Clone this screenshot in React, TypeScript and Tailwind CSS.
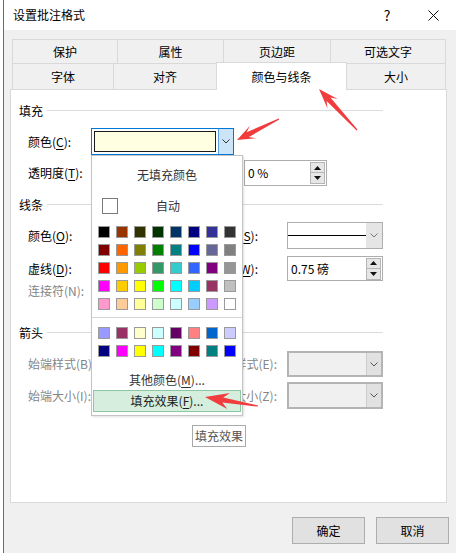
import React from 'react';

const paletteTop = [
  ['#000000', '#993300', '#333300', '#003300', '#003366', '#000080', '#333399', '#333333'],
  ['#800000', '#ff6600', '#808000', '#008000', '#008080', '#0000ff', '#666699', '#808080'],
  ['#ff0000', '#ff9900', '#99cc00', '#339966', '#33cccc', '#3366ff', '#800080', '#969696'],
  ['#ff00ff', '#ffcc00', '#ffff00', '#00ff00', '#00ffff', '#00ccff', '#993366', '#c0c0c0'],
  ['#ff99cc', '#ffcc99', '#ffff99', '#ccffcc', '#ccffff', '#99ccff', '#cc99ff', '#ffffff'],
];

const paletteBottom = [
  ['#9999ff', '#993366', '#ffffcc', '#ccffff', '#660066', '#ff8080', '#0066cc', '#ccccff'],
  ['#000080', '#ff00ff', '#ffff00', '#00ffff', '#800080', '#800000', '#008080', '#0000ff'],
];

// annotation arrow: thin tail widening toward a swept-back head
function arrow(tx: number, ty: number, px: number, py: number, head: number, barb: number) {
  const dx = px - tx;
  const dy = py - ty;
  const len = Math.hypot(dx, dy);
  const ux = dx / len;
  const uy = dy / len;
  const nx = -uy;
  const ny = ux;
  const bx = px - ux * head;
  const by = py - uy * head;
  const kx = px - ux * (head - 6);
  const ky = py - uy * (head - 6);
  const neck = 2.6;
  const tail = 0.6;
  const pts = [
    [tx + nx * tail, ty + ny * tail],
    [kx + nx * neck, ky + ny * neck],
    [bx + nx * barb, by + ny * barb],
    [px, py],
    [bx - nx * barb, by - ny * barb],
    [kx - nx * neck, ky - ny * neck],
    [tx - nx * tail, ty - ny * tail],
  ];
  return pts.map((p) => `${p[0].toFixed(1)},${p[1].toFixed(1)}`).join(' ');
}

function Chevron({ color = '#555' }: { color?: string }) {
  return (
    <svg width="8" height="5" viewBox="0 0 8 5">
      <polyline points="0.5,0.5 4,4 7.5,0.5" fill="none" stroke={color} strokeWidth="1" />
    </svg>
  );
}

function SpinButtons() {
  return (
    <div className="flex flex-col w-[15px] mr-px">
      <div className="h-[11px] bg-[#e6e6e6] border border-[#b5b5b5] flex items-center justify-center">
        <svg width="7" height="4" viewBox="0 0 7 4">
          <polygon points="3.5,0 7,4 0,4" fill="#111" />
        </svg>
      </div>
      <div className="h-[11px] bg-[#e6e6e6] border border-t-0 border-[#b5b5b5] flex items-center justify-center">
        <svg width="7" height="4" viewBox="0 0 7 4">
          <polygon points="0,0 7,0 3.5,4" fill="#111" />
        </svg>
      </div>
    </div>
  );
}

function Header({ text }: { text: string }) {
  return (
    <div className="flex items-center h-[16px] pl-[8px] pr-[63px]">
      <span className="leading-[16px]">{text}</span>
      <div className="flex-1 h-px bg-[#dcdcdc] ml-[4px] -mt-[2px]" />
    </div>
  );
}

function Label({ children, disabled }: { children: React.ReactNode; disabled?: boolean }) {
  return (
    <span className={`w-[63px] shrink-0 whitespace-nowrap leading-[16px] ${disabled ? 'text-[#858585]' : 'text-black'}`}>
      {children}
    </span>
  );
}

function DisabledCombo() {
  return (
    <div className="w-[96px] h-full border-2 border-[#b4b4b4] bg-[#f0f0f0] flex">
      <div className="flex-1" />
      <div className="w-[15px] bg-[#e1e1e1] border-l border-[#cdcdcd] flex items-center justify-center">
        <Chevron />
      </div>
    </div>
  );
}

function ColorPopup() {
  return (
    <div className="absolute left-[-1px] top-[26px] w-[152px] bg-white border border-[#c4c4c4] shadow-[1px_1px_2px_rgba(0,0,0,0.12)] z-20 text-[#333]">
      <div className="h-[38px] flex items-center justify-center leading-[16px]">无填充颜色</div>
      <div className="h-[23px] flex items-center">
        <div className="ml-[10px] w-[16px] h-[16px] border border-[#7a7a7a]" />
        <span className="ml-[38px] leading-[16px]">自动</span>
      </div>
      <div className="mt-[9px] pl-[6px] grid grid-cols-[repeat(8,12px)] gap-[6px]">
        {paletteTop.flat().map((c, i) => (
          <div key={i} className="w-[12px] h-[12px] border border-[#9a9a9a]" style={{ backgroundColor: c }} />
        ))}
      </div>
      <div className="mt-[7px] h-px bg-[#d7d7d7]" />
      <div className="mt-[9px] pl-[6px] grid grid-cols-[repeat(8,12px)] gap-[6px]">
        {paletteBottom.flat().map((c, i) => (
          <div key={i} className="w-[12px] h-[12px] border border-[#9a9a9a]" style={{ backgroundColor: c }} />
        ))}
      </div>
      <div className="mt-[13px] h-[20px] flex items-center justify-center leading-[16px]">
        其他颜色(<span className="underline underline-offset-2">M</span>)...
      </div>
      <div className="mx-px mb-[3px] h-[22px] bg-[#d5eedd] border border-[#8cc7a1] flex items-center justify-center leading-[16px] text-[#222]">
        填充效果(<span className="underline underline-offset-2">F</span>)...
      </div>
    </div>
  );
}

export default function App() {
  const tabTop = ['保护', '属性', '页边距', '可选文字'];
  const tabTopW = ['w-[105px]', 'w-[106px]', 'w-[107px]', 'w-[116px]'];

  return (
    <div className="relative w-[456px] h-[554px] bg-white overflow-hidden text-[12px] font-['Noto_Sans_CJK_SC',sans-serif]">
      <div className="ml-[3px] h-[553px] border-l border-[#3079c7] bg-[#f0f0f0] flex flex-col">
        {/* title bar */}
        <div className="h-[30px] bg-white flex items-center">
          <span className="flex-1 pl-[9px] text-black">设置批注格式</span>
          <div className="w-[46px] h-[30px] flex items-center justify-center text-[14px] text-black">?</div>
          <div className="w-[46px] h-[30px] flex items-center justify-center">
            <svg width="11" height="11" viewBox="0 0 11 11">
              <line x1="0.5" y1="0.5" x2="10.5" y2="10.5" stroke="#111" strokeWidth="1" />
              <line x1="10.5" y1="0.5" x2="0.5" y2="10.5" stroke="#111" strokeWidth="1" />
            </svg>
          </div>
        </div>

        {/* tabs */}
        <div className="mt-[9px] ml-[8px] flex">
          {tabTop.map((t, i) => (
            <div
              key={t}
              className={`${tabTopW[i]} h-[24px] border-t border-l border-[#d9d9d9] ${i === 3 ? 'border-r' : ''} flex items-center justify-center`}
            >
              {t}
            </div>
          ))}
        </div>
        <div className="ml-[8px] flex items-end h-[26px]">
          <div className="w-[101px] h-[26px] border-t border-l border-[#d9d9d9] flex items-center justify-center">字体</div>
          <div className="w-[103px] h-[26px] border-t border-l border-[#d9d9d9] flex items-center justify-center">对齐</div>
          <div className="relative z-10 w-[131px] h-[28px] -mb-px bg-white border-t border-l border-r border-[#d9d9d9] flex items-center justify-center">
            颜色与线条
          </div>
          <div className="w-[99px] h-[26px] border-t border-r border-[#d9d9d9] flex items-center justify-center">大小</div>
        </div>

        {/* panel */}
        <div className="relative ml-[6px] w-[437px] h-[414px] bg-white border border-[#d9d9d9] flex flex-col">
          <div className="mt-[13px]">
            <Header text="填充" />
          </div>

          <div className="mt-[9px] h-[27px] flex items-center pl-[17px]">
            <Label>
              颜色(<span className="underline underline-offset-2">C</span>):
            </Label>
            <div className="relative w-[143px] h-[27px] border border-[#0078d7] bg-white flex">
              <div className="flex-1 m-[2px] bg-[#ffffe1] border border-[#1a1a1a]" />
              <div className="w-[15px] bg-[#cce4f7] border-l border-[#5a9fe0] flex items-center justify-center">
                <Chevron color="#333" />
              </div>
              <ColorPopup />
            </div>
          </div>

          <div className="mt-[5px] h-[26px] flex items-center pl-[17px]">
            <Label>
              透明度(<span className="underline underline-offset-2">T</span>):
            </Label>
            <div className="w-[153px] shrink-0" />
            <div className="w-[83px] h-[26px] border border-[#adadad] bg-white flex items-center">
              <span className="flex-1 pl-[3px] leading-[16px]">0 %</span>
              <SpinButtons />
            </div>
          </div>

          <div className="mt-[11px]">
            <Header text="线条" />
          </div>

          <div className="mt-[9px] h-[27px] flex items-center pl-[17px]">
            <Label>
              颜色(<span className="underline underline-offset-2">O</span>):
            </Label>
            <span className="w-[167px] shrink-0 text-right leading-[16px]">
              线形(<span className="underline underline-offset-2">S</span>):
            </span>
            <div className="ml-[29px] w-[96px] h-[27px] border border-[#adadad] bg-white flex">
              <div className="flex-1 flex items-center">
                <div className="w-full h-px bg-black" />
              </div>
              <div className="w-[16px] bg-[#e5e5e5] flex items-center justify-center">
                <Chevron color="#777" />
              </div>
            </div>
          </div>

          <div className="mt-[7px] h-[25px] flex items-center pl-[17px]">
            <Label>
              虚线(<span className="underline underline-offset-2">D</span>):
            </Label>
            <span className="w-[167px] shrink-0 text-right leading-[16px]">
              粗细(<span className="underline underline-offset-2">W</span>):
            </span>
            <div className="ml-[29px] w-[96px] h-[25px] border border-[#adadad] bg-white flex items-center">
              <span className="flex-1 pl-[3px] leading-[16px]">0.75 磅</span>
              <SpinButtons />
            </div>
          </div>

          <div className="h-[20px] flex items-center pl-[17px]">
            <Label disabled>连接符(N):</Label>
          </div>

          <div className="mt-[24px]">
            <Header text="箭头" />
          </div>

          <div className="mt-[10px] h-[26px] flex items-center pl-[17px]">
            <Label disabled>始端样式(B):</Label>
            <span className="w-[186px] shrink-0 text-right leading-[16px] text-[#858585]">末端样式(E):</span>
            <div className="ml-[10px] h-[26px]">
              <DisabledCombo />
            </div>
          </div>

          <div className="mt-[5px] h-[27px] flex items-center pl-[17px]">
            <Label disabled>始端大小(I):</Label>
            <span className="w-[186px] shrink-0 text-right leading-[16px] text-[#858585]">末端大小(Z):</span>
            <div className="ml-[10px] h-[27px]">
              <DisabledCombo />
            </div>
          </div>

          {/* tooltip */}
          <div className="absolute left-[181px] top-[335px] h-[22px] px-[2px] bg-white border border-[#a9a9a9] flex items-center text-[#555] leading-[16px]">
            填充效果
          </div>
        </div>

        {/* buttons */}
        <div className="mt-[14px] flex justify-end gap-[11px] pr-[7px]">
          <button className="w-[73px] h-[27px] bg-[#e1e1e1] border border-[#adadad] text-black">确定</button>
          <button className="w-[73px] h-[27px] bg-[#e1e1e1] border border-[#adadad] text-black">取消</button>
        </div>
      </div>

      {/* red annotation arrows */}
      <svg className="absolute inset-0 pointer-events-none z-50" width="456" height="554" viewBox="0 0 456 554">
        <polygon points={arrow(279, 119, 237, 140, 18, 7)} fill="#f03c3c" />
        <polygon points={arrow(357, 130, 319, 89, 20, 7)} fill="#f03c3c" />
        <polygon points={arrow(258, 406, 205, 397, 24, 8)} fill="#f03c3c" />
      </svg>
    </div>
  );
}
